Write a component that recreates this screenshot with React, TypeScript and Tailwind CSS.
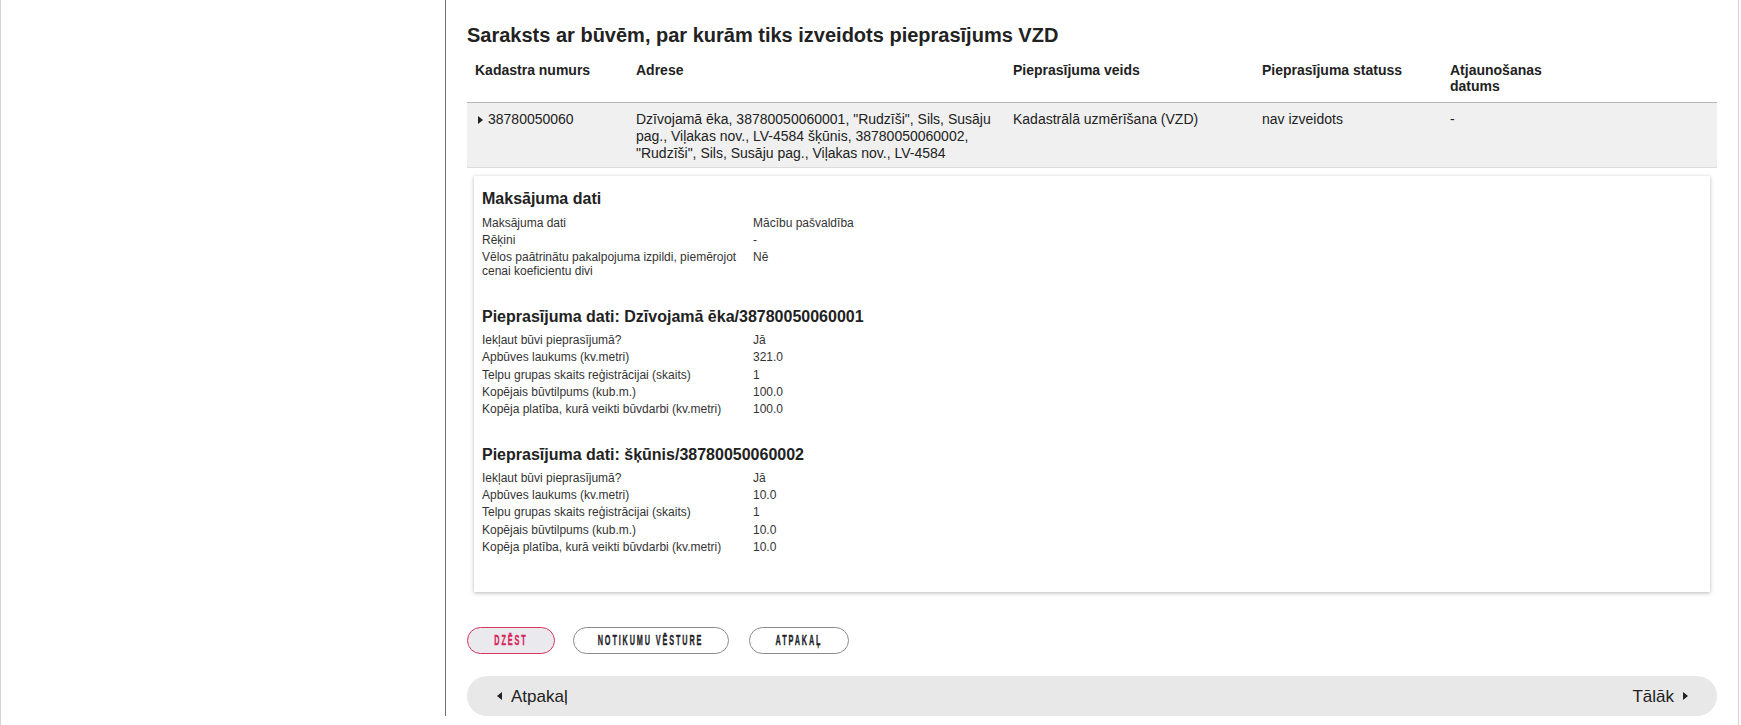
import React from 'react';

type Row = { label: string; value: string };

const payment: Row[] = [
  { label: 'Maksājuma dati', value: 'Mācību pašvaldība' },
  { label: 'Rēķini', value: '-' },
  { label: 'Vēlos paātrinātu pakalpojuma izpildi, piemērojot cenai koeficientu divi', value: 'Nē' },
];

const house: Row[] = [
  { label: 'Iekļaut būvi pieprasījumā?', value: 'Jā' },
  { label: 'Apbūves laukums (kv.metri)', value: '321.0' },
  { label: 'Telpu grupas skaits reģistrācijai (skaits)', value: '1' },
  { label: 'Kopējais būvtilpums (kub.m.)', value: '100.0' },
  { label: 'Kopēja platība, kurā veikti būvdarbi (kv.metri)', value: '100.0' },
];

const shed: Row[] = [
  { label: 'Iekļaut būvi pieprasījumā?', value: 'Jā' },
  { label: 'Apbūves laukums (kv.metri)', value: '10.0' },
  { label: 'Telpu grupas skaits reģistrācijai (skaits)', value: '1' },
  { label: 'Kopējais būvtilpums (kub.m.)', value: '10.0' },
  { label: 'Kopēja platība, kurā veikti būvdarbi (kv.metri)', value: '10.0' },
];

function Section({ title, rows, first }: { title: string; rows: Row[]; first?: boolean }) {
  return (
    <div className={first ? '' : 'mt-[28px]'}>
      <h3 className="text-[16px] leading-[18px] font-bold text-[#222] mb-[6px]">{title}</h3>
      {rows.map((r) => (
        <div key={r.label} className="flex text-[12px] leading-[14px] text-[#333]">
          <div className="w-[271px] shrink-0 pr-[7px] py-[1.6px]">{r.label}</div>
          <div className="py-[1.6px]">{r.value}</div>
        </div>
      ))}
    </div>
  );
}

function Triangle({ dir, className }: { dir: 'left' | 'right'; className?: string }) {
  return (
    <svg width="5" height="8" viewBox="0 0 5 8" className={className}>
      {dir === 'right' ? <path d="M0 0 L5 4 L0 8 Z" fill="#222" /> : <path d="M5 0 L0 4 L5 8 Z" fill="#222" />}
    </svg>
  );
}

function PillButton({ label, danger, width }: { label: string; danger?: boolean; width: string }) {
  return (
    <button
      className={
        'h-[27px] rounded-full border flex items-center justify-center overflow-hidden ' +
        width +
        (danger ? ' border-[#d8345f] bg-[#e9e9ee] text-[#d8245a]' : ' border-[#8a8a8a] bg-white text-[#1f1f2b]')
      }
    >
      <span className="inline-block scale-x-[0.52] text-[14px] font-bold tracking-[3.6px] whitespace-nowrap [-webkit-text-stroke:0.4px_currentColor]">
        {label}
      </span>
    </button>
  );
}

export default function App() {
  return (
    <div className="w-[1739px] min-h-[725px] border-l border-r border-[#d4d4d4] bg-white font-['Liberation_Sans',Arial,sans-serif] text-[#222]">
      <div className="flex">
        <aside className="w-[445px] shrink-0 border-r border-[#707070]" />
        <main className="flex-1 pl-[21px] pr-[21px] pt-[24px]">
          <h2 className="text-[20px] leading-[23px] font-bold text-[#222]">
            Saraksts ar būvēm, par kurām tiks izveidots pieprasījums VZD
          </h2>

          <div className="mt-[7px]">
            <div className="grid grid-cols-[161px_377px_249px_188px_110px_1fr] border-b border-[#b5b5b5] text-[14px] leading-[16px] font-bold">
              <div className="px-2 py-2">Kadastra numurs</div>
              <div className="px-2 py-2">Adrese</div>
              <div className="px-2 py-2">Pieprasījuma veids</div>
              <div className="px-2 py-2">Pieprasījuma statuss</div>
              <div className="px-2 py-2">
                Atjaunošanas
                <br />
                datums
              </div>
              <div />
            </div>
            <div className="grid grid-cols-[161px_377px_249px_188px_110px_1fr] bg-[#f0f0f0] border-b border-[#dcdcdc] text-[14px] leading-[17px] text-[#222]">
              <div className="pl-[11px] pr-2 pt-2 pb-[5px] flex items-start">
                <Triangle dir="right" className="mt-[4.5px] mr-[5px] shrink-0" />
                <span>38780050060</span>
              </div>
              <div className="px-2 pt-2 pb-[5px]">
                Dzīvojamā ēka, 38780050060001, "Rudzīši", Sils, Susāju pag., Viļakas nov., LV-4584 šķūnis,
                38780050060002, "Rudzīši", Sils, Susāju pag., Viļakas nov., LV-4584
              </div>
              <div className="px-2 pt-2 pb-[5px]">Kadastrālā uzmērīšana (VZD)</div>
              <div className="px-2 pt-2 pb-[5px]">nav izveidots</div>
              <div className="px-2 pt-2 pb-[5px]">-</div>
              <div />
            </div>
          </div>

          <div className="mt-2 mx-[7px] bg-white shadow-[0_1px_4px_rgba(0,0,0,0.28)] pt-[14px] pb-[37px] px-2">
            <Section title="Maksājuma dati" rows={payment} first />
            <Section title="Pieprasījuma dati: Dzīvojamā ēka/38780050060001" rows={house} />
            <Section title="Pieprasījuma dati: šķūnis/38780050060002" rows={shed} />
          </div>

          <div className="mt-[35px] flex items-center">
            <PillButton label="DZĒST" danger width="w-[88px]" />
            <div className="ml-[18px]">
              <PillButton label="NOTIKUMU VĒSTURE" width="w-[156px]" />
            </div>
            <div className="ml-[20px]">
              <PillButton label="ATPAKAĻ" width="w-[100px]" />
            </div>
          </div>

          <div className="mt-[22px] h-[40px] rounded-full bg-[#e8e8e8] flex items-center justify-between pl-[30px] pr-[29px] text-[17px] text-[#222]">
            <div className="flex items-center">
              <Triangle dir="left" className="mr-[9px]" />
              <span>Atpakaļ</span>
            </div>
            <div className="flex items-center">
              <span>Tālāk</span>
              <Triangle dir="right" className="ml-[9px]" />
            </div>
          </div>
        </main>
      </div>
    </div>
  );
}
